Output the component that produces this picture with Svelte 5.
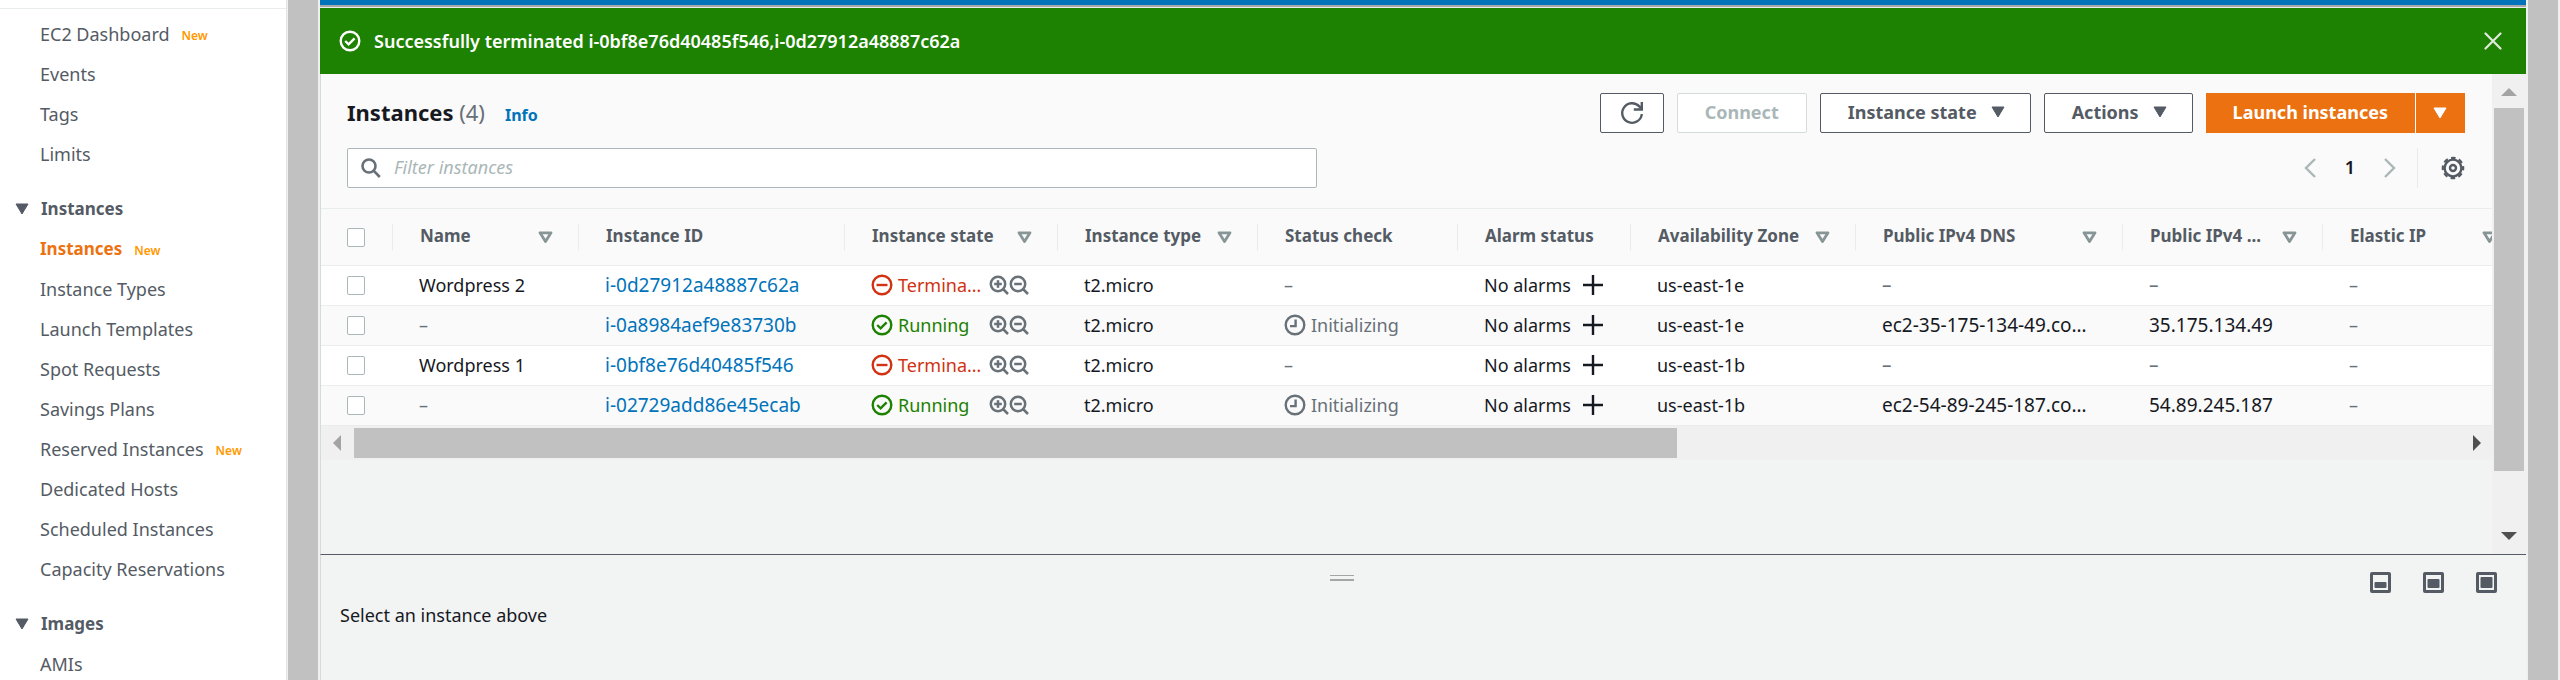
<script>
  const topLinks = [
    { label: 'EC2 Dashboard', isNew: true },
    { label: 'Events' },
    { label: 'Tags' },
    { label: 'Limits' }
  ];
  const groups = [
    {
      title: 'Instances',
      links: [
        { label: 'Instances', isNew: true, active: true },
        { label: 'Instance Types' },
        { label: 'Launch Templates' },
        { label: 'Spot Requests' },
        { label: 'Savings Plans' },
        { label: 'Reserved Instances', isNew: true },
        { label: 'Dedicated Hosts' },
        { label: 'Scheduled Instances' },
        { label: 'Capacity Reservations' }
      ]
    },
    { title: 'Images', links: [{ label: 'AMIs' }] }
  ];

  const columns = [
    { key: 'name', label: 'Name', sort: true },
    { key: 'id', label: 'Instance ID' },
    { key: 'state', label: 'Instance state', sort: true },
    { key: 'type', label: 'Instance type', sort: true },
    { key: 'status', label: 'Status check' },
    { key: 'alarm', label: 'Alarm status' },
    { key: 'zone', label: 'Availability Zone', sort: true },
    { key: 'dns', label: 'Public IPv4 DNS', sort: true },
    { key: 'ip', label: 'Public IPv4 ...', sort: true },
    { key: 'elastic', label: 'Elastic IP', sort: true }
  ];

  const rows = [
    { name: 'Wordpress 2', id: 'i-0d27912a48887c62a', running: false, zone: 'us-east-1e', dns: '–', ip: '–' },
    { name: '–', id: 'i-0a8984aef9e83730b', running: true, zone: 'us-east-1e', dns: 'ec2-35-175-134-49.co…', ip: '35.175.134.49' },
    { name: 'Wordpress 1', id: 'i-0bf8e76d40485f546', running: false, zone: 'us-east-1b', dns: '–', ip: '–' },
    { name: '–', id: 'i-02729add86e45ecab', running: true, zone: 'us-east-1b', dns: 'ec2-54-89-245-187.co…', ip: '54.89.245.187' }
  ];

  const panelSizes = [
    { label: 'Small panel', y: 10, h: 6 },
    { label: 'Medium panel', y: 7, h: 9 },
    { label: 'Full panel', y: 5, h: 11 }
  ];
</script>

{#snippet caret()}
  <svg class="caret" width="14" height="12" viewBox="0 0 14 12" aria-hidden="true">
    <path d="M1 1h12L7 11z" fill="currentColor" stroke="currentColor" stroke-linejoin="round" />
  </svg>
{/snippet}

{#snippet okIcon()}
  <svg width="22" height="22" viewBox="0 0 22 22" fill="none" stroke="currentColor" stroke-width="2.4" aria-hidden="true">
    <circle cx="11" cy="11" r="9.3" />
    <path d="M6.2 11l3.4 3.3 6-6" />
  </svg>
{/snippet}

{#snippet magnifier(plus)}
  <svg width="20" height="20" viewBox="0 0 20 20" fill="none" stroke="currentColor" stroke-width="2.5" aria-hidden="true">
    <circle cx="9" cy="9" r="7.2" />
    <path d="M14 14l5 5M5.2 9h7.6" />
    {#if plus}<path d="M9 5.2v7.6" />{/if}
  </svg>
{/snippet}

<div class="app">
  <nav>
    <ul class="top">
      {#each topLinks as link}
        <li><a href="#top">{link.label}</a>{#if link.isNew}<span class="new">New</span>{/if}</li>
      {/each}
    </ul>
    {#each groups as group}
      <button class="group">{@render caret()}{group.title}</button>
      <ul>
        {#each group.links as link}
          <li>
            <a href="#top" class:active={link.active}>{link.label}</a>{#if link.isNew}<span class="new">New</span>{/if}
          </li>
        {/each}
      </ul>
    {/each}
  </nav>
  <div class="track edge"><div class="thumb"></div></div>

  <main>
    <div class="bluebar"></div>
    <div class="flash" role="status">
      {@render okIcon()}
      <span>Successfully terminated i-0bf8e76d40485f546,i-0d27912a48887c62a</span>
      <button aria-label="Dismiss">
        <svg width="18" height="18" viewBox="0 0 18 18" stroke="currentColor" stroke-width="2.2" stroke-linecap="round" aria-hidden="true">
          <path d="M1.5 1.5l15 15M16.5 1.5l-15 15" />
        </svg>
      </button>
    </div>

    <div class="workspace">
      <section class="content">
        <header>
          <div class="bar">
            <h1>Instances <span>(4)</span></h1>
            <a class="info" href="#top">Info</a>
            <div class="actions">
              <button class="btn refresh" aria-label="Refresh">
                <svg width="24" height="24" viewBox="0 0 24 24" fill="none" stroke="currentColor" stroke-width="2.4" aria-hidden="true">
                  <path d="M21.800 13a9.800 9.800 0 1 1-2.500-7.600L21.500 8" />
                  <path d="M21.800 1v7.500h-8" />
                </svg>
              </button>
              <button class="btn" disabled>Connect</button>
              <button class="btn menu">Instance state {@render caret()}</button>
              <button class="btn menu">Actions {@render caret()}</button>
              <div class="split">
                <button class="primary">Launch instances</button>
                <button class="primary drop" aria-label="More launch options">{@render caret()}</button>
              </div>
            </div>
          </div>
          <div class="bar">
            <div class="search">
              <svg width="20" height="20" viewBox="0 0 20 20" fill="none" stroke="currentColor" stroke-width="2.6" aria-hidden="true">
                <circle cx="8" cy="8" r="6.500" />
                <path d="M12.600 12.600l6.200 6.400" />
              </svg>
              <input type="search" placeholder="Filter instances" aria-label="Filter instances" />
            </div>
            <div class="pager">
              <button aria-label="Previous page">
                <svg width="12" height="20" viewBox="0 0 12 20" fill="none" stroke="currentColor" stroke-width="2.4" aria-hidden="true"><path d="M11 1L2 10l9 9" /></svg>
              </button>
              <span>1</span>
              <button aria-label="Next page">
                <svg width="12" height="20" viewBox="0 0 12 20" fill="none" stroke="currentColor" stroke-width="2.4" aria-hidden="true"><path d="M1 1l9 9-9 9" /></svg>
              </button>
              <button class="gear" aria-label="Preferences">
                <svg width="24" height="24" viewBox="0 0 24 24" fill="none" stroke="currentColor" aria-hidden="true">
                  <circle cx="12" cy="12" r="8.400" stroke-width="2.400" />
                  <circle cx="12" cy="12" r="10.200" stroke-width="2.200" stroke-dasharray="4.600 3.411" stroke-dashoffset="2.300" />
                  <circle cx="12" cy="12" r="3" stroke-width="2.400" />
                </svg>
              </button>
            </div>
          </div>
        </header>

        <div class="table-wrap">
          <table>
            <colgroup>
              <col class="c-select" />
              {#each columns as col}<col class="c-{col.key}" />{/each}
            </colgroup>
            <thead>
              <tr>
                <th class="pick"><input type="checkbox" aria-label="Select all instances" /></th>
                {#each columns as col}
                  <th>
                    <div class="head">
                      <span>{col.label}</span>
                      {#if col.sort}
                        <svg width="15" height="13" viewBox="0 0 15 13" fill="none" stroke="currentColor" stroke-width="2.800" stroke-linejoin="round" aria-hidden="true">
                          <path d="M2 1.800h11L7.500 10.600z" />
                        </svg>
                      {/if}
                    </div>
                  </th>
                {/each}
              </tr>
            </thead>
            <tbody>
              {#each rows as row}
                <tr>
                  <td class="pick"><input type="checkbox" aria-label="Select {row.id}" /></td>
                  <td class:none={row.name === '–'}>{row.name}</td>
                  <td class="code"><a href="#top">{row.id}</a></td>
                  <td>
                    <div class="cell">
                      {#if row.running}
                        <span class="state ok">{@render okIcon()}Running</span>
                      {:else}
                        <span class="state bad">
                          <svg width="22" height="22" viewBox="0 0 22 22" fill="none" stroke="currentColor" stroke-width="2.400" aria-hidden="true">
                            <circle cx="11" cy="11" r="9.300" />
                            <path d="M5.500 11h11" />
                          </svg>Termina…</span>
                      {/if}
                      <span class="lens">{@render magnifier(true)}{@render magnifier(false)}</span>
                    </div>
                  </td>
                  <td>t2.micro</td>
                  <td class="none">
                    {#if row.running}
                      <span class="state">
                        <svg width="22" height="22" viewBox="0 0 22 22" fill="none" stroke="currentColor" stroke-width="2.400" aria-hidden="true">
                          <circle cx="11" cy="11" r="9.300" />
                          <path d="M11.600 5.500v6.600H6" />
                        </svg>Initializing</span>
                    {:else}–{/if}
                  </td>
                  <td>
                    <div class="cell alarm">
                      No alarms
                      <svg width="20" height="20" viewBox="0 0 20 20" stroke="currentColor" stroke-width="2.400" aria-hidden="true"><path d="M10 0v20M0 10h20" /></svg>
                    </div>
                  </td>
                  <td>{row.zone}</td>
                  <td class="code" class:none={row.dns === '–'}>{row.dns}</td>
                  <td class="code" class:none={row.ip === '–'}>{row.ip}</td>
                  <td class="none">–</td>
                </tr>
              {/each}
            </tbody>
          </table>
        </div>
        <div class="hscroll">
          <svg class="dim" width="8" height="16" viewBox="0 0 8 16" aria-hidden="true"><path d="M8 0v16L0 8z" /></svg>
          <div class="lane"><div></div></div>
          <svg width="8" height="16" viewBox="0 0 8 16" aria-hidden="true"><path d="M0 0v16l8-8z" /></svg>
        </div>
      </section>
      <div class="track inner">
        <svg class="dim" width="16" height="8" viewBox="0 0 16 8" aria-hidden="true"><path d="M0 8h16L8 0z" /></svg>
        <div class="lane"><div></div></div>
        <svg width="16" height="8" viewBox="0 0 16 8" aria-hidden="true"><path d="M0 0h16L8 8z" /></svg>
      </div>
    </div>

    <section class="panel">
      <div class="panel-top">
        <div class="grip"></div>
        <div class="sizes">
          {#each panelSizes as size}
            <button aria-label={size.label}>
              <svg width="21" height="21" viewBox="0 0 21 21" aria-hidden="true">
                <rect x="1.500" y="1.500" width="18" height="18" rx="0.500" fill="none" stroke="currentColor" stroke-width="3" />
                <rect x="4.500" y={size.y} width="12" height={size.h} rx="1" fill="currentColor" />
              </svg>
            </button>
          {/each}
        </div>
      </div>
      <p>Select an instance above</p>
    </section>
  </main>
  <div class="track"><div class="thumb"></div></div>
</div>

<style>
  .app {
    display: flex;
    height: 100vh;
    overflow: hidden;
    font: 18px/24px "Noto Sans", "Open Sans", sans-serif;
    color: #16191f;
    background: #fff;
  }
  .app * { box-sizing: border-box; }
  svg { display: block; flex: none; }
  a { color: #0073bb; text-decoration: none; }
  button {
    font: inherit;
    color: inherit;
    background: none;
    border: 0;
    padding: 0;
  }

  nav {
    flex: none;
    width: 286px;
    padding-top: 8px;
    color: #545b64;
  }
  nav ul { list-style: none; margin: 0; padding: 0 0 0 40px; }
  nav .top { border-top: 1px solid #eaeded; padding-top: 6px; }
  nav li { display: flex; align-items: center; height: 40px; padding-bottom: 2px; }
  nav a { color: #545b64; }
  nav a.active { color: #ec7211; font-weight: 700; font-size: 17px; }
  .new { margin: 4px 0 0 12px; font-size: 12px; font-weight: 600; color: #ff9900; }
  .group {
    display: flex;
    align-items: center;
    gap: 12px;
    height: 42px;
    margin-top: 13px;
    padding-left: 15px;
    font-size: 17px;
    font-weight: 700;
  }

  .track { flex: none; width: 34px; background: #f0f0f0; padding: 0 2px; }
  .track.edge { border-left: 1px solid #e3e5e5; padding-left: 1px; }
  .thumb { height: 100%; background: #c1c1c1; }
  .track.inner {
    display: flex;
    flex-direction: column;
    align-items: center;
    padding: 14px 2px;
    fill: #505050;
  }
  .inner .lane { flex: 1; align-self: stretch; padding: 12px 0; }
  .inner .lane div { height: 88%; background: #c1c1c1; }
  .dim { fill: #a3a3a3; }

  main { flex: 1; min-width: 0; display: flex; flex-direction: column; }
  .bluebar { flex: none; height: 8px; background: #eaeded; border-top: 5px solid #0073bb; box-shadow: inset 0 2px 0 #a5a9ac; }
  .flash {
    flex: none;
    display: flex;
    align-items: center;
    gap: 13px;
    height: 66px;
    padding: 0 24px 0 19px;
    background: #1d8102;
    color: #fff;
    font-weight: 600;
  }
  .flash button { margin-left: auto; color: #e0eadd; }

  .workspace { flex: 1; min-height: 0; display: flex; background: #f2f3f3; }
  .content { flex: 1; min-width: 0; border-left: 1px solid #d5dbdb; }
  header {
    display: flex;
    flex-direction: column;
    gap: 15px;
    padding: 19px 27px 20px 26px;
    background: #fafafa;
    border-bottom: 1px solid #eaeded;
  }
  .bar { display: flex; align-items: center; height: 40px; }
  h1 { margin: 0; padding-bottom: 2px; font-size: 22px; line-height: 28px; font-weight: 700; }
  h1 span { color: #687078; font-weight: 400; }
  .info { margin: 4px 0 0 20px; font-size: 16px; font-weight: 700; }
  .actions { display: flex; gap: 13px; margin-left: auto; color: #545b64; }
  .btn, .primary {
    display: flex;
    align-items: center;
    height: 40px;
    padding: 0 27px 2px;
    font-weight: 700;
  }
  .btn { background: #fff; border: 1px solid #545b64; border-radius: 2px; }
  .btn:disabled { color: #aab7b8; border-color: #d5dbdb; }
  .btn.refresh { padding: 0 19px; }
  .menu { gap: 14px; padding-right: 25px; }
  .split { display: flex; gap: 1px; background: #fff; color: #fff; }
  .primary { background: #ec7211; }
  .primary.drop { padding: 0 18px 0 17px; }

  .search {
    flex: none;
    display: flex;
    align-items: center;
    gap: 13px;
    width: 45.8%;
    height: 40px;
    padding: 0 13px;
    background: #fff;
    border: 1px solid #aab7b8;
    border-radius: 2px;
    color: #687078;
  }
  .search input {
    flex: 1;
    min-width: 0;
    padding: 0 0 2px;
    border: 0;
    outline: 0;
    background: none;
    font: inherit;
    appearance: none;
  }
  .search input::placeholder { color: #aab7b8; font-style: italic; opacity: 1; }
  .pager { display: flex; align-items: center; gap: 29px; margin-left: auto; color: #aab7b8; }
  .pager span { padding-bottom: 2px; color: #16191f; font-weight: 600; }
  .pager .gear {
    display: flex;
    align-items: center;
    height: 40px;
    padding-left: 23px;
    margin-left: -8px;
    border-left: 1px solid #eaeded;
    color: #545b64;
  }

  .table-wrap { overflow: hidden; }
  table { width: 2201px; table-layout: fixed; border-collapse: separate; border-spacing: 0; }
  .c-select { width: 71px; }
  .c-name { width: 186px; }
  .c-id { width: 266px; }
  .c-state { width: 213px; }
  .c-type, .c-status, .c-ip, .c-elastic { width: 200px; }
  .c-alarm { width: 173px; }
  .c-zone { width: 225px; }
  .c-dns { width: 267px; }
  th, td { padding: 0 0 0 27px; text-align: left; white-space: nowrap; border-bottom: 1px solid #eaeded; }
  th { height: 57px; padding-left: 0; background: #fafafa; font-size: 17px; font-weight: 700; color: #545b64; }
  td { height: 40px; padding-bottom: 2px; background: #fff; }
  tr:nth-child(even) td { background: #fafafa; }
  .pick { padding: 0 0 0 26px; }
  .head {
    display: flex;
    align-items: center;
    justify-content: space-between;
    height: 27px;
    padding: 0 25px 0 27px;
    border-left: 1px solid #eaeded;
  }
  .head span { padding-bottom: 2px; }
  .head svg { color: #879596; }
  .none { color: #687078; }
  .code { font-size: 19px; }
  .pick input {
    display: block;
    appearance: none;
    width: 18px;
    height: 19px;
    margin: 0;
    background: #fff;
    border: 1px solid #aab7b8;
    border-radius: 2px;
  }
  .cell { display: flex; align-items: center; }
  .state { display: flex; align-items: center; gap: 5px; }
  .cell .state { width: 118px; }
  .ok { color: #1d8102; }
  .bad { color: #d13212; }
  .lens { display: flex; color: #687078; }
  .alarm { gap: 12px; }

  .hscroll {
    display: flex;
    align-items: center;
    height: 34px;
    padding: 0 11px 0 12px;
    background: #f0f0f0;
    fill: #505050;
  }
  .hscroll .lane { flex: 1; padding: 0 12px 0 13px; }
  .hscroll .lane div { width: 62.8%; height: 30px; background: #c1c1c1; }

  .panel {
    flex: none;
    height: 126px;
    border-top: 1px solid #545b64;
    border-left: 1px solid #d5dbdb;
    background: #f2f3f3;
  }
  .panel-top { display: grid; grid-template-columns: 15fr 24px 17fr; height: 48px; padding: 17px 29px 0 0; }
  .grip { grid-column: 2; height: 6px; margin: 3px 0 0 0; border: solid #a3a6a6; border-width: 1px 0 2px; }
  .sizes { display: flex; justify-content: flex-end; align-items: flex-start; gap: 32px; color: #545b64; }
  .panel p { margin: 0; padding-left: 19px; }
</style>
